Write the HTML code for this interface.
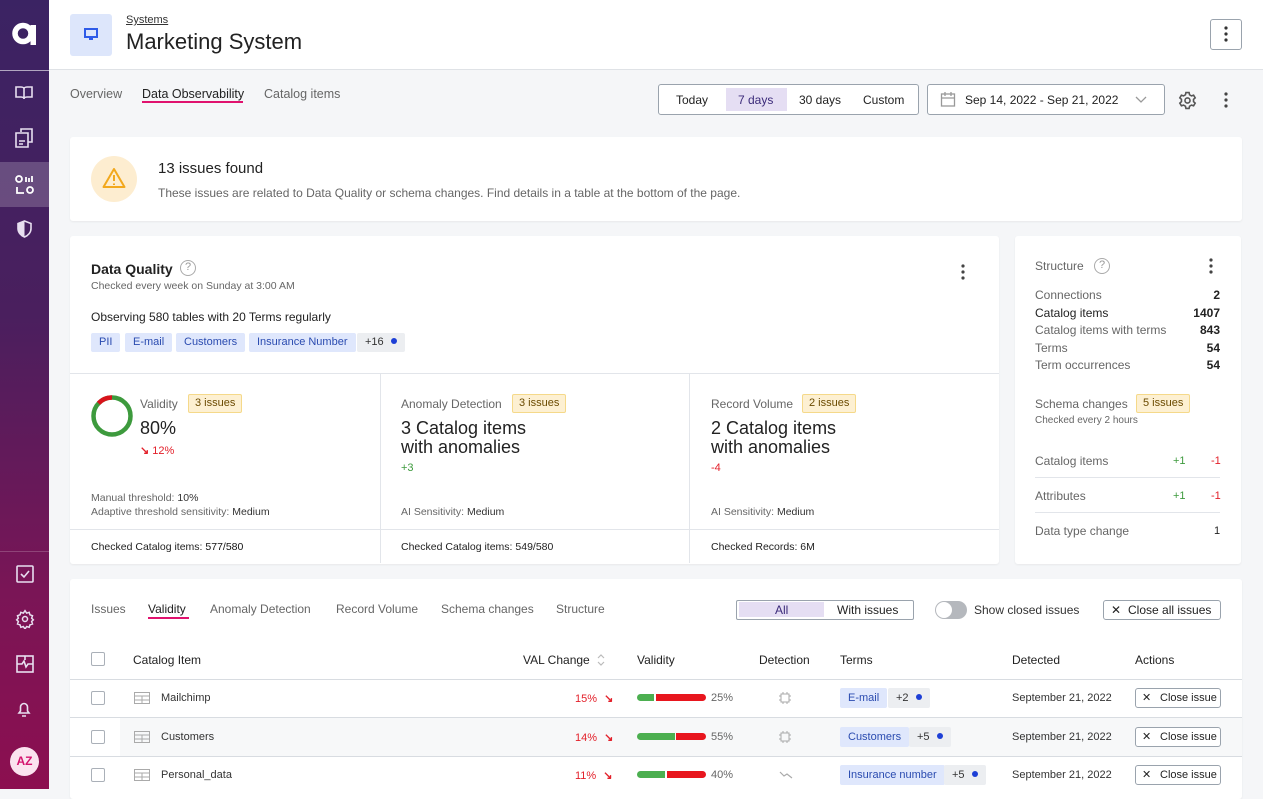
<!DOCTYPE html>
<html><head><meta charset="utf-8"><style>
*{box-sizing:border-box;margin:0;padding:0}
body{width:1263px;height:789px;overflow:hidden;background:#f5f6f8;font-family:"Liberation Sans",sans-serif;color:#222;position:relative}
.a{position:absolute}
.side{left:0;top:0;width:49px;height:789px;background:linear-gradient(180deg,#3b2363 0%,#4a1f5e 40%,#7a1556 75%,#8c0f50 100%)}
.card{background:#fff;border-radius:3px;box-shadow:0 1px 2px rgba(0,0,0,.06)}
.t11{font-size:11px}.t12{font-size:12px}.t13{font-size:13px}
.g{color:#666}
.tag{position:absolute;height:19px;line-height:19px;padding:0 8px;font-size:11px;background:#dfe7fc;color:#2a4bb0;border-radius:2px}
.tagg{background:#eceef1;color:#333}
.dot{display:inline-block;width:6px;height:6px;border-radius:50%;background:#1d3fd6;margin-left:7px;vertical-align:1px}
.iss{position:absolute;height:19px;line-height:17px;padding:0 6px;font-size:11px;background:#fdf0d2;border:1px solid #f5d98a;color:#6b4a00;border-radius:2px}
.big{font-size:18px;line-height:19px;color:#222}
.cb{position:absolute;width:14px;height:14px;border:1px solid #aab0b8;border-radius:2px;background:#fff}
.hr{position:absolute;height:1px;background:#e2e5ea}
.btn{position:absolute;border:1px solid #9aa3ad;border-radius:3px;background:#fff;font-size:11px;height:20px;line-height:18px;padding-left:24px;color:#222}
.x{position:absolute;font-size:11px;line-height:12px}
</style></head><body>
<div class="a side">
 <svg class="a" style="left:12px;top:22px" width="26" height="23" viewBox="0 0 26 23"><circle cx="11" cy="11.5" r="8" fill="none" stroke="#fff" stroke-width="5.5"/><rect x="18.5" y="3" width="5.5" height="20" fill="#fff"/></svg>
 <div class="a" style="left:0;top:70px;width:49px;height:1px;background:rgba(255,255,255,.6)"></div>
 <div class="a" style="left:0;top:162px;width:49px;height:45px;background:rgba(255,255,255,.2)"></div>
 <div class="a" style="left:0;top:551px;width:49px;height:1px;background:rgba(255,255,255,.2)"></div>
 <svg class="a" style="left:14px;top:84px" width="20" height="18" viewBox="0 0 20 18" fill="none" stroke="#e8dff0" stroke-width="1.6"><path d="M2 3h5c2 0 3 1 3 2v10c0-1-1-2-3-2H2zM18 3h-5c-2 0-3 1-3 2v10c0-1 1-2 3-2h5z"/></svg>
 <svg class="a" style="left:15px;top:128px" width="18" height="20" viewBox="0 0 18 20" fill="none" stroke="#e8dff0" stroke-width="1.6"><path d="M6 4V1h11v13h-4M1 5h12v14H1zM4 13h6M4 16h4"/></svg>
 <svg class="a" style="left:15px;top:175px" width="20" height="20" viewBox="0 0 20 20" fill="none" stroke="#fff" stroke-width="1.8"><circle cx="4" cy="4" r="3"/><circle cx="15" cy="15" r="3"/><path d="M11 2v5M14 3v4M17 1v6M2 12v6h7"/></svg>
 <svg class="a" style="left:16px;top:220px" width="17" height="18" viewBox="0 0 17 18"><path d="M8.5 1L2 3.5v5c0 4 3 7 6.5 8.5C12 15.5 15 12.5 15 8.5v-5z" fill="none" stroke="#e8dff0" stroke-width="1.6"/><path d="M8.5 1L2 3.5v5c0 4 3 7 6.5 8.5z" fill="#e8dff0"/></svg>
 <svg class="a" style="left:16px;top:565px" width="18" height="18" viewBox="0 0 18 18" fill="none" stroke="#e8dff0" stroke-width="1.6"><rect x="1" y="1" width="16" height="16" rx="1"/><path d="M5 9l3 3 5-6"/></svg>
 <svg class="a" style="left:15px;top:609px" width="20" height="20" viewBox="0 0 24 24" fill="none" stroke="#e8dff0" stroke-width="1.8"><circle cx="12" cy="12" r="3"/><path d="M12 2l2 3 3-1 1 3 3 1-1 3 2 2-2 2 1 3-3 1-1 3-3-1-2 3-2-3-3 1-1-3-3-1 1-3-2-2 2-2-1-3 3-1 1-3 3 1z"/></svg>
 <svg class="a" style="left:16px;top:655px" width="18" height="18" viewBox="0 0 18 18" fill="none" stroke="#e8dff0" stroke-width="1.6"><rect x="1" y="1" width="16" height="16"/><path d="M1 9h5l2-3 2 6 2-3h5M9 1v4"/></svg>
 <svg class="a" style="left:17px;top:701px" width="14" height="17" viewBox="0 0 14 17" fill="none" stroke="#e8dff0" stroke-width="1.6"><path d="M2 12h10l-1.5-2V6a3.5 3.5 0 0 0-7 0v4zM5 15h4"/></svg>
 <div class="a" style="left:10px;top:747px;width:29px;height:29px;border-radius:50%;background:#fbe3ef;color:#d4136e;font-size:12px;font-weight:bold;text-align:center;line-height:29px">AZ</div>
</div>
<div class="a" style="left:49px;top:0;width:1214px;height:70px;background:#fff;border-bottom:1px solid #dfe2e6"></div>
<div class="a" style="left:70px;top:14px;width:42px;height:42px;background:#dde6fb;border-radius:3px"></div>
<svg class="a" style="left:84px;top:28px" width="14" height="13" viewBox="0 0 14 13"><rect x="1" y="1" width="12" height="8" fill="none" stroke="#2e5be8" stroke-width="2"/><rect x="5" y="10" width="4" height="2" fill="#2e5be8"/></svg>
<div class="a t11" style="left:126px;top:14px;color:#333;text-decoration:underline">Systems</div>
<div class="a" style="left:126px;top:29px;font-size:22px;color:#222">Marketing System</div>
<div class="a" style="left:1210px;top:19px;width:32px;height:31px;border:1px solid #9aa3ad;border-radius:3px;background:#fff"></div>
<svg class="a" style="left:1224px;top:26px" width="4" height="16"><circle cx="2" cy="2" r="1.6" fill="#333"/><circle cx="2" cy="8" r="1.6" fill="#333"/><circle cx="2" cy="14" r="1.6" fill="#333"/></svg>

<div class="a g" style="left:70px;top:87px;font-size:12.5px">Overview</div>
<div class="a" style="left:142px;top:87px;font-size:12.5px;color:#222">Data Observability</div>
<div class="a" style="left:142px;top:101px;width:101px;height:2px;background:#e0126e"></div>
<div class="a g" style="left:264px;top:87px;font-size:12.5px">Catalog items</div>

<div class="a" style="left:658px;top:84px;width:261px;height:31px;border:1px solid #9aa3ad;border-radius:3px;background:#fff"></div>
<div class="a" style="left:726px;top:88px;width:61px;height:23px;background:#e5def3"></div>
<div class="a t12" style="left:676px;top:93px">Today</div>
<div class="a t12" style="left:738px;top:93px;color:#3b2a7a">7 days</div>
<div class="a t12" style="left:799px;top:93px">30 days</div>
<div class="a t12" style="left:863px;top:93px">Custom</div>
<div class="a" style="left:927px;top:84px;width:238px;height:31px;border:1px solid #9aa3ad;border-radius:3px;background:#fff"></div>
<svg class="a" style="left:940px;top:91px" width="16" height="16" viewBox="0 0 16 16" fill="none" stroke="#999" stroke-width="1.3"><rect x="1.5" y="3" width="13" height="12"/><path d="M1.5 7h13M5 1v4M11 1v4"/></svg>
<div class="a t12" style="left:965px;top:93px">Sep 14, 2022 - Sep 21, 2022</div>
<svg class="a" style="left:1135px;top:96px" width="12" height="8"><path d="M1 1l5 5 5-5" fill="none" stroke="#999" stroke-width="1.3"/></svg>
<svg class="a" style="left:1178px;top:91px" width="19" height="19" viewBox="0 0 24 24" fill="none" stroke="#555" stroke-width="2"><circle cx="12" cy="12" r="3.2"/><path d="M10 2h4l.6 2.8 2.4 1.4 2.7-.9 2 3.4-2.1 1.9v2.8l2.1 1.9-2 3.4-2.7-.9-2.4 1.4L14 22h-4l-.6-2.8-2.4-1.4-2.7.9-2-3.4 2.1-1.9v-2.8L2.3 8.7l2-3.4 2.7.9 2.4-1.4z"/></svg>
<svg class="a" style="left:1224px;top:92px" width="4" height="16"><circle cx="2" cy="2" r="1.6" fill="#444"/><circle cx="2" cy="8" r="1.6" fill="#444"/><circle cx="2" cy="14" r="1.6" fill="#444"/></svg>

<div class="a card" style="left:70px;top:137px;width:1172px;height:84px"></div>
<div class="a" style="left:91px;top:156px;width:46px;height:46px;border-radius:50%;background:#fdedd0"></div>
<svg class="a" style="left:102px;top:167px" width="24" height="22" viewBox="0 0 24 22" fill="none" stroke="#f2a81d" stroke-width="2"><path d="M12 2L1.5 20h21z" stroke-linejoin="round"/><path d="M12 8v6M12 16.5v1.5"/></svg>
<div class="a" style="left:158px;top:160px;font-size:15px">13 issues found</div>
<div class="a t12 g" style="left:158px;top:186px">These issues are related to Data Quality or schema changes. Find details in a table at the bottom of the page.</div>

<div class="a card" style="left:70px;top:236px;width:929px;height:328px"></div>
<div class="a" style="left:91px;top:261px;font-size:14px;font-weight:bold;color:#222">Data Quality</div>
<div class="a" style="left:180px;top:260px;width:16px;height:16px;border:1.5px solid #aaa;border-radius:50%;font-size:11px;color:#999;text-align:center;line-height:13px">?</div>
<div class="a t11 g" style="left:91px;top:280px;font-size:10.5px">Checked every week on Sunday at 3:00 AM</div>
<svg class="a" style="left:961px;top:264px" width="4" height="16"><circle cx="2" cy="2" r="1.6" fill="#444"/><circle cx="2" cy="8" r="1.6" fill="#444"/><circle cx="2" cy="14" r="1.6" fill="#444"/></svg>
<div class="a t12" style="left:91px;top:310px">Observing 580 tables with 20 Terms regularly</div>
<div class="tag" style="left:91px;top:333px">PII</div>
<div class="tag" style="left:125px;top:333px">E-mail</div>
<div class="tag" style="left:176px;top:333px">Customers</div>
<div class="tag" style="left:249px;top:333px">Insurance Number</div>
<div class="tag tagg" style="left:357px;top:333px">+16<span class="dot"></span></div>
<div class="hr" style="left:70px;top:373px;width:929px"></div>
<div class="hr" style="left:70px;top:529px;width:929px"></div>
<div class="a" style="left:380px;top:373px;width:1px;height:190px;background:#e2e5ea"></div>
<div class="a" style="left:689px;top:373px;width:1px;height:190px;background:#e2e5ea"></div>
<svg class="a" style="left:90px;top:394px" width="44" height="44" viewBox="0 0 44 44"><circle cx="22" cy="22" r="18.5" fill="none" stroke="#3d9a3d" stroke-width="4.5"/><path d="M22 3.5A18.5 18.5 0 0 0 8.5 9.3" fill="none" stroke="#d8131b" stroke-width="4.5"/></svg>
<div class="a t12 g" style="left:140px;top:397px">Validity</div>
<div class="iss" style="left:188px;top:394px">3 issues</div>
<div class="a" style="left:140px;top:418px;font-size:18px">80%</div>
<div class="a t11" style="left:140px;top:444px;color:#e3202a"><b>↘</b> 12%</div>
<div class="a t11 g" style="left:91px;top:492px;font-size:10.5px">Manual threshold: <span style="color:#333">10%</span></div>
<div class="a t11 g" style="left:91px;top:506px;font-size:10.5px">Adaptive threshold sensitivity: <span style="color:#333">Medium</span></div>
<div class="a t11" style="left:91px;top:541px;font-size:10.5px">Checked Catalog items: <b style="font-weight:normal;color:#111">577/580</b></div>

<div class="a t12 g" style="left:401px;top:397px">Anomaly Detection</div>
<div class="iss" style="left:512px;top:394px">3 issues</div>
<div class="a big" style="left:401px;top:419px">3 Catalog items<br>with anomalies</div>
<div class="a t11" style="left:401px;top:462px;color:#3d9a3d">+3</div>
<div class="a t11 g" style="left:401px;top:506px;font-size:10.5px">AI Sensitivity: <span style="color:#333">Medium</span></div>
<div class="a t11" style="left:401px;top:541px;font-size:10.5px">Checked Catalog items: 549/580</div>

<div class="a t12 g" style="left:711px;top:397px">Record Volume</div>
<div class="iss" style="left:802px;top:394px">2 issues</div>
<div class="a big" style="left:711px;top:419px">2 Catalog items<br>with anomalies</div>
<div class="a t11" style="left:711px;top:462px;color:#e3202a">-4</div>
<div class="a t11 g" style="left:711px;top:506px;font-size:10.5px">AI Sensitivity: <span style="color:#333">Medium</span></div>
<div class="a t11" style="left:711px;top:541px;font-size:10.5px">Checked Records: 6M</div>

<div class="a card" style="left:1015px;top:236px;width:226px;height:328px"></div>
<div class="a t12 g" style="left:1035px;top:259px">Structure</div>
<div class="a" style="left:1094px;top:258px;width:16px;height:16px;border:1.5px solid #aaa;border-radius:50%;font-size:11px;color:#999;text-align:center;line-height:13px">?</div>
<svg class="a" style="left:1209px;top:258px" width="4" height="16"><circle cx="2" cy="2" r="1.6" fill="#444"/><circle cx="2" cy="8" r="1.6" fill="#444"/><circle cx="2" cy="14" r="1.6" fill="#444"/></svg>
<div class="a t12" style="left:1035px;top:287px;width:185px;line-height:17.5px">
<div style="display:flex;justify-content:space-between"><span class="g">Connections</span><b style="font-weight:bold">2</b></div>
<div style="display:flex;justify-content:space-between;color:#222"><span>Catalog items</span><b>1407</b></div>
<div style="display:flex;justify-content:space-between"><span class="g">Catalog items with terms</span><b>843</b></div>
<div style="display:flex;justify-content:space-between"><span class="g">Terms</span><b>54</b></div>
<div style="display:flex;justify-content:space-between"><span class="g">Term occurrences</span><b>54</b></div>
</div>
<div class="a t12 g" style="left:1035px;top:397px">Schema changes</div>
<div class="iss" style="left:1136px;top:394px">5 issues</div>
<div class="a g" style="left:1035px;top:415px;font-size:10px">Checked every 2 hours</div>
<div class="a t12 g" style="left:1035px;top:454px">Catalog items</div>
<div class="a t11" style="left:1173px;top:455px;color:#3d9a3d">+1</div>
<div class="a t11" style="left:1211px;top:455px;color:#e3202a">-1</div>
<div class="hr" style="left:1035px;top:477px;width:185px"></div>
<div class="a t12 g" style="left:1035px;top:489px">Attributes</div>
<div class="a t11" style="left:1173px;top:490px;color:#3d9a3d">+1</div>
<div class="a t11" style="left:1211px;top:490px;color:#e3202a">-1</div>
<div class="hr" style="left:1035px;top:512px;width:185px"></div>
<div class="a t12 g" style="left:1035px;top:524px">Data type change</div>
<div class="a t11" style="left:1214px;top:525px">1</div>

<div class="a card" style="left:70px;top:579px;width:1172px;height:220px"></div>
<div class="a t12 g" style="left:91px;top:602px">Issues</div>
<div class="a t12" style="left:148px;top:602px">Validity</div>
<div class="a" style="left:148px;top:617px;width:41px;height:2px;background:#e0126e"></div>
<div class="a t12 g" style="left:210px;top:602px">Anomaly Detection</div>
<div class="a t12 g" style="left:336px;top:602px">Record Volume</div>
<div class="a t12 g" style="left:441px;top:602px">Schema changes</div>
<div class="a t12 g" style="left:556px;top:602px">Structure</div>
<div class="a" style="left:736px;top:600px;width:178px;height:20px;border:1px solid #9aa3ad;border-radius:2px;background:#fff"></div>
<div class="a" style="left:739px;top:602px;width:85px;height:15px;background:#e5def3"></div>
<div class="a t12" style="left:775px;top:603px;color:#3b2a7a">All</div>
<div class="a t12" style="left:837px;top:603px">With issues</div>
<div class="a" style="left:935px;top:601px;width:32px;height:18px;border-radius:9px;background:#b5b8bd"></div>
<div class="a" style="left:936px;top:602px;width:16px;height:16px;border-radius:50%;background:#fff"></div>
<div class="a t12" style="left:974px;top:603px;color:#333">Show closed issues</div>
<div class="btn" style="left:1103px;top:600px;width:118px;font-size:12px">Close all issues</div>
<div class="x" style="left:1111px;top:604px;font-size:12px">✕</div>

<div class="cb" style="left:91px;top:652px"></div>
<div class="a t12" style="left:133px;top:653px">Catalog Item</div>
<div class="a t12" style="left:523px;top:653px">VAL Change</div>
<svg class="a" style="left:597px;top:654px" width="8" height="12"><path d="M1 4l3-3 3 3M1 8l3 3 3-3" fill="none" stroke="#bbb" stroke-width="1.2"/></svg>
<div class="a t12" style="left:637px;top:653px">Validity</div>
<div class="a t12" style="left:759px;top:653px">Detection</div>
<div class="a t12" style="left:840px;top:653px">Terms</div>
<div class="a t12" style="left:1012px;top:653px">Detected</div>
<div class="a t12" style="left:1135px;top:653px">Actions</div>
<div class="hr" style="left:70px;top:679px;width:1172px;background:#d8dce1"></div>
<div class="a" style="left:120px;top:718px;width:1122px;height:38px;background:#f7f8f9"></div>
<div class="hr" style="left:70px;top:717px;width:1172px;background:#d8dce1"></div>
<div class="hr" style="left:70px;top:756px;width:1172px;background:#d8dce1"></div>

<div class="cb" style="left:91px;top:691px"></div>
<div class="cb" style="left:91px;top:730px"></div>
<div class="cb" style="left:91px;top:768px"></div>
<svg class="a" style="left:134px;top:692px" width="16" height="12"><rect x=".5" y=".5" width="15" height="11" fill="none" stroke="#aaa"/><path d="M.5 4h15M.5 8h15M8 4v8" stroke="#aaa"/></svg>
<svg class="a" style="left:134px;top:731px" width="16" height="12"><rect x=".5" y=".5" width="15" height="11" fill="none" stroke="#aaa"/><path d="M.5 4h15M.5 8h15M8 4v8" stroke="#aaa"/></svg>
<svg class="a" style="left:134px;top:769px" width="16" height="12"><rect x=".5" y=".5" width="15" height="11" fill="none" stroke="#aaa"/><path d="M.5 4h15M.5 8h15M8 4v8" stroke="#aaa"/></svg>
<div class="a t11" style="left:161px;top:692px;color:#333">Mailchimp</div>
<div class="a t11" style="left:161px;top:731px;color:#333">Customers</div>
<div class="a t11" style="left:161px;top:769px;color:#333">Personal_data</div>

<div class="a t11" style="left:575px;top:692px;color:#e3202a">15% <b style="margin-left:4px">↘</b></div>
<div class="a t11" style="left:575px;top:731px;color:#e3202a">14% <b style="margin-left:4px">↘</b></div>
<div class="a t11" style="left:575px;top:769px;color:#e3202a">11% <b style="margin-left:4px">↘</b></div>

<div class="a" style="left:637px;top:694px;width:17px;height:7px;background:#4caf50;border-radius:4px 0 0 4px"></div><div class="a" style="left:656px;top:694px;width:50px;height:7px;background:#e8161e;border-radius:0 4px 4px 0"></div>
<div class="a" style="left:637px;top:733px;width:38px;height:7px;background:#4caf50;border-radius:4px 0 0 4px"></div><div class="a" style="left:676px;top:733px;width:30px;height:7px;background:#e8161e;border-radius:0 4px 4px 0"></div>
<div class="a" style="left:637px;top:771px;width:28px;height:7px;background:#4caf50;border-radius:4px 0 0 4px"></div><div class="a" style="left:667px;top:771px;width:39px;height:7px;background:#e8161e;border-radius:0 4px 4px 0"></div>
<div class="a t11 g" style="left:711px;top:692px">25%</div>
<div class="a t11 g" style="left:711px;top:731px">55%</div>
<div class="a t11 g" style="left:711px;top:769px">40%</div>

<svg class="a" style="left:779px;top:692px" width="12" height="12"><rect x="2" y="2" width="8" height="8" fill="none" stroke="#aaa"/><path d="M4 0v2M8 0v2M4 10v2M8 10v2M0 4h2M0 8h2M10 4h2M10 8h2" stroke="#aaa"/></svg>
<svg class="a" style="left:779px;top:731px" width="12" height="12"><rect x="2" y="2" width="8" height="8" fill="none" stroke="#aaa"/><path d="M4 0v2M8 0v2M4 10v2M8 10v2M0 4h2M0 8h2M10 4h2M10 8h2" stroke="#aaa"/></svg>
<svg class="a" style="left:779px;top:770px" width="14" height="9"><path d="M1 2l4 4 3-2 5 4" fill="none" stroke="#aaa" stroke-width="1.2"/></svg>

<div class="tag" style="left:840px;top:688px;height:20px;line-height:20px">E-mail</div>
<div class="tag tagg" style="left:888px;top:688px;height:20px;line-height:20px">+2<span class="dot"></span></div>
<div class="tag" style="left:840px;top:727px;height:20px;line-height:20px">Customers</div>
<div class="tag tagg" style="left:909px;top:727px;height:20px;line-height:20px">+5<span class="dot"></span></div>
<div class="tag" style="left:840px;top:765px;height:20px;line-height:20px">Insurance number</div>
<div class="tag tagg" style="left:944px;top:765px;height:20px;line-height:20px">+5<span class="dot"></span></div>

<div class="a t11" style="left:1012px;top:692px;color:#333">September 21, 2022</div>
<div class="a t11" style="left:1012px;top:731px;color:#333">September 21, 2022</div>
<div class="a t11" style="left:1012px;top:769px;color:#333">September 21, 2022</div>
<div class="btn" style="left:1135px;top:688px;width:86px">Close issue</div><div class="x" style="left:1142px;top:692px">✕</div>
<div class="btn" style="left:1135px;top:727px;width:86px">Close issue</div><div class="x" style="left:1142px;top:731px">✕</div>
<div class="btn" style="left:1135px;top:765px;width:86px">Close issue</div><div class="x" style="left:1142px;top:769px">✕</div>
</body></html>
